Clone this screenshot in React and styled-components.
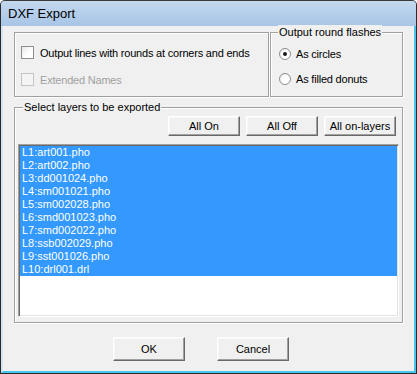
import React, { useState } from "react";
import styled, { createGlobalStyle } from "styled-components";

const GlobalStyle = createGlobalStyle`
  html, body {
    margin: 0;
    padding: 0;
    background: #ffffff;
  }
  body {
    font-family: "Liberation Sans", Arial, sans-serif;
    font-size: 11px;
  }
`;

const Window = styled.div`
  width: 417px;
  height: 374px;
  box-sizing: border-box;
  border: 1px solid #2a2a2a;
  border-top-color: #3a3a3a;
  border-radius: 5px 5px 0 0;
  background: #a9c6e6;
  display: flex;
  flex-direction: column;
  overflow: hidden;
`;

const TitleBar = styled.div`
  height: 25px;
  flex: none;
  display: flex;
  align-items: center;
  padding-left: 7px;
  background: linear-gradient(#c4d9ef, #b3cdea 55%, #a8c5e6);
  font-size: 13px;
  color: #000;
`;

const Frame = styled.div`
  flex: 1;
  display: flex;
  border-left: 2px solid #d5e4f4;
  border-right: 2px solid #46c5ee;
  border-bottom: 2px solid #46c5ee;
`;

const Client = styled.div`
  flex: 1;
  background: #f0f0f0;
  padding: 6px 10px 0 11px;
  display: flex;
  flex-direction: column;
`;

const TopRow = styled.div`
  display: flex;
  gap: 1px;
`;

const Group = styled.div`
  position: relative;
  box-sizing: border-box;
  width: ${(p) => p.$w}px;
  height: ${(p) => p.$h}px;
  margin-top: ${(p) => p.$mt || 0}px;
  border: 1px solid #a0a0a0;
  box-shadow: inset 1px 1px #ffffff, 1px 1px #ffffff;
  padding: ${(p) => p.$pad};
  display: flex;
  flex-direction: column;
`;

const Legend = styled.span`
  position: absolute;
  top: -8px;
  left: ${(p) => p.$left}px;
  padding: 0 1px;
  background: #f0f0f0;
  line-height: 14px;
  color: #000;
`;

const OptionRow = styled.div`
  display: flex;
  align-items: center;
  height: 13px;
  gap: ${(p) => p.$gap}px;
  margin-bottom: ${(p) => p.$mb}px;
  color: ${(p) => (p.$disabled ? "#a0a0a0" : "#000")};
  letter-spacing: -0.2px;
  white-space: nowrap;
`;

const CheckBox = styled.span`
  width: 13px;
  height: 13px;
  box-sizing: border-box;
  flex: none;
  border: 1px solid ${(p) => (p.$disabled ? "#c4c4c4" : "#8e8f8f")};
  background: ${(p) =>
    p.$disabled ? "#f4f4f4" : "linear-gradient(135deg, #e8e8e8, #ffffff 60%)"};
`;

const Radio = styled.span`
  width: 12px;
  height: 12px;
  box-sizing: border-box;
  flex: none;
  border-radius: 50%;
  border: 1px solid #8e8f8f;
  background: radial-gradient(circle at 60% 60%, #ffffff 40%, #e4e4e4);
  display: flex;
  align-items: center;
  justify-content: center;

  &::after {
    content: "";
    width: 4px;
    height: 4px;
    border-radius: 50%;
    background: ${(p) => (p.$checked ? "#1a1a1a" : "transparent")};
  }
`;

const ButtonRow = styled.div`
  display: flex;
  justify-content: flex-end;
  gap: 6px;
  padding-right: 6px;
`;

const Button = styled.button`
  width: ${(p) => p.$w || 72}px;
  height: ${(p) => p.$h || 20}px;
  box-sizing: border-box;
  padding: 0;
  margin: 0;
  background: #f0f0f0;
  border: 1px solid;
  border-color: #ffffff #696969 #696969 #ffffff;
  box-shadow: inset -1px -1px #a0a0a0, inset 1px 1px #f8f8f8;
  font-family: "Liberation Sans", Arial, sans-serif;
  font-size: 11px;
  color: #000;
  cursor: default;
`;

const LayerList = styled.div`
  margin: 8px 3px 0 3px;
  flex: 1;
  box-sizing: border-box;
  background: #ffffff;
  border: 1px solid;
  border-color: #a0a0a0 #ffffff #ffffff #a0a0a0;
  box-shadow: inset 1px 1px #696969, inset -1px -1px #e3e3e3;
  padding: 1px;
`;

const LayerItem = styled.div`
  height: 13px;
  line-height: 13px;
  padding-left: 2px;
  background: ${(p) => (p.$selected ? "#3399ff" : "transparent")};
  color: ${(p) => (p.$selected ? "#ffffff" : "#000")};
  white-space: nowrap;
`;

const Footer = styled.div`
  display: flex;
  gap: 32px;
  padding: 14px 0 0 99px;
`;

const layers = [
  "L1:art001.pho",
  "L2:art002.pho",
  "L3:dd001024.pho",
  "L4:sm001021.pho",
  "L5:sm002028.pho",
  "L6:smd001023.pho",
  "L7:smd002022.pho",
  "L8:ssb002029.pho",
  "L9:sst001026.pho",
  "L10:drl001.drl",
];

export default function App() {
  const [selected] = useState(layers.map(() => true));

  return (
    <>
      <GlobalStyle />
      <Window>
        <TitleBar>DXF Export</TitleBar>
        <Frame>
          <Client>
            <TopRow>
              <Group $w={255} $h={65} $pad="13px 0 0 6px">
                <OptionRow $gap={6} $mb={14}>
                  <CheckBox />
                  Output lines with rounds at corners and ends
                </OptionRow>
                <OptionRow $gap={6} $mb={0} $disabled>
                  <CheckBox $disabled />
                  Extended Names
                </OptionRow>
              </Group>
              <Group $w={133} $h={65} $pad="14px 0 0 8px">
                <Legend $left={7}>Output round flashes</Legend>
                <OptionRow $gap={5} $mb={12}>
                  <Radio $checked />
                  As circles
                </OptionRow>
                <OptionRow $gap={5} $mb={0}>
                  <Radio />
                  As filled donuts
                </OptionRow>
              </Group>
            </TopRow>
            <Group $w={389} $h={216} $mt={10} $pad="8px 0 5px 0">
              <Legend $left={8}>Select layers to be exported</Legend>
              <ButtonRow>
                <Button>All On</Button>
                <Button>All Off</Button>
                <Button>All on-layers</Button>
              </ButtonRow>
              <LayerList>
                {layers.map((name, i) => (
                  <LayerItem key={name} $selected={selected[i]}>
                    {name}
                  </LayerItem>
                ))}
              </LayerList>
            </Group>
            <Footer>
              <Button $h={24}>OK</Button>
              <Button $h={24}>Cancel</Button>
            </Footer>
          </Client>
        </Frame>
      </Window>
    </>
  );
}
